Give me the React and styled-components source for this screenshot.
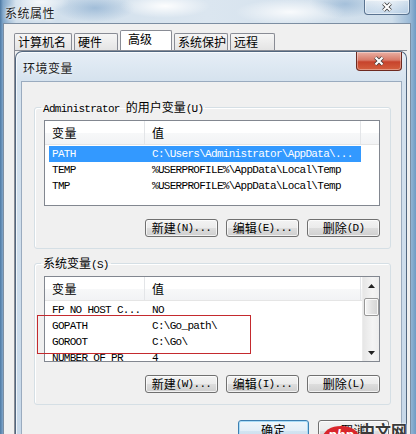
import React from "react";
import styled, {createGlobalStyle} from "styled-components";

const userVars = [
  {name: "PATH", value: "C:\\Users\\Administrator\\AppData\\...", selected: true},
  {name: "TEMP", value: "%USERPROFILE%\\AppData\\Local\\Temp"},
  {name: "TMP", value: "%USERPROFILE%\\AppData\\Local\\Temp"},
];

const sysVars = [
  {name: "FP NO HOST C...", value: "NO"},
  {name: "GOPATH", value: "C:\\Go_path\\"},
  {name: "GOROOT", value: "C:\\Go\\"},
  {name: "NUMBER OF PR", value: "4"},
];

const tabs = [
  {label: "计算机名", w: 58},
  {label: "硬件", w: 44},
  {label: "高级", w: 52, active: true},
  {label: "系统保护", w: 54},
  {label: "远程", w: 45},
];

const CJK_RE = /([\u3000-\u9fff\uff00-\uffef]+)/;

// SimSun style: wide CJK, narrow mono latin
const Txt = ({children}) =>
  String(children)
    .split(CJK_RE)
    .filter(Boolean)
    .map((part, i) =>
      CJK_RE.test(part) ? <Cjk key={i}>{part}</Cjk> : <span key={i}>{part}</span>
    );

const XIcon = () => (
  <svg width="12" height="10" viewBox="0 0 12 10">
    <path d="M2.5 1.5 L9.5 8.5 M9.5 1.5 L2.5 8.5" stroke="#3a3a3a" strokeWidth="3.8" />
    <path d="M2.5 1.5 L9.5 8.5 M9.5 1.5 L2.5 8.5" stroke="#fff" strokeWidth="2.2" />
  </svg>
);

const Arrow = ({down}) => (
  <svg width="7" height="4" viewBox="0 0 7 4">
    <path d={down ? "M0 0 L7 0 L3.5 4Z" : "M0 4 L3.5 0 L7 4Z"} fill="#222" />
  </svg>
);

const VarList = ({rows, scroll}) => (
  <ListBox>
    <ListMain>
      <Header>
        <HeaderCell>变量</HeaderCell>
        <HeaderCell>值</HeaderCell>
        <HeaderCell />
      </Header>
      <Rows>
        {rows.map((r) => (
          <Row key={r.name} $selected={r.selected}>
            <Cell $pl={3}>{r.name}</Cell>
            <Cell $pl={7}>{r.value}</Cell>
          </Row>
        ))}
      </Rows>
    </ListMain>
    {scroll && (
      <ScrollBar>
        <ArrowBtn>
          <Arrow />
        </ArrowBtn>
        <Thumb />
        <Track />
        <ArrowBtn>
          <Arrow down />
        </ArrowBtn>
      </ScrollBar>
    )}
  </ListBox>
);

const Buttons = ({labels}) => (
  <ButtonRow>
    {labels.map((l) => (
      <Button key={l}>
        <Txt>{l}</Txt>
      </Button>
    ))}
  </ButtonRow>
);

export default function App() {
  return (
    <Page>
      <GlobalStyle />
      <TitleBar>
        <TitleText>系统属性</TitleText>
        <GlassClose>
          <XIcon />
        </GlassClose>
      </TitleBar>
      <OuterBody>
        <TabRow>
          {tabs.map((t) => (
            <Tab key={t.label} $w={t.w} $active={t.active}>
              {t.label}
            </Tab>
          ))}
        </TabRow>
        <TabPanel>
          <Dialog>
            <DialogTitle>
              <DialogTitleText>环境变量</DialogTitleText>
              <RedClose>
                <XIcon />
              </RedClose>
            </DialogTitle>
            <Client>
              <Group>
                <Legend>
                  <Txt>Administrator 的用户变量(U)</Txt>
                </Legend>
                <VarList rows={userVars} />
                <Buttons labels={["新建(N)...", "编辑(E)...", "删除(D)"]} />
              </Group>
              <Group>
                <Legend>
                  <Txt>系统变量(S)</Txt>
                </Legend>
                <ListWrap>
                  <VarList rows={sysVars} scroll />
                  <Marker />
                </ListWrap>
                <Buttons labels={["新建(W)...", "编辑(I)...", "删除(L)"]} />
              </Group>
              <BottomRow>
                <DlgButton $focused>确定</DlgButton>
                <DlgButton>取消</DlgButton>
              </BottomRow>
            </Client>
          </Dialog>
        </TabPanel>
      </OuterBody>
      <Watermark>
        <PhpBadge>php</PhpBadge>
        <WatermarkText>中文网</WatermarkText>
      </Watermark>
    </Page>
  );
}

const GlobalStyle = createGlobalStyle`
  html, body {
    margin: 0;
    padding: 0;
  }
  body {
    background: #c6d9ea;
  }
  * {
    box-sizing: border-box;
  }
`;

const Cjk = styled.span`
  font-family: "Noto Sans CJK SC", sans-serif;
  font-size: 12px;
  letter-spacing: 0;
`;

const Page = styled.div`
  position: relative;
  width: 416px;
  height: 434px;
  overflow: hidden;
  display: flex;
  flex-direction: column;
  font-family: "Liberation Mono", "Noto Sans CJK SC", monospace;
  font-size: 11px;
  letter-spacing: -0.7px;
  color: #000;
  background:
    radial-gradient(ellipse 45px 12px at 165px 6px, rgba(255, 255, 255, 0.95), transparent),
    radial-gradient(ellipse 55px 13px at 290px 12px, rgba(255, 255, 255, 0.85), transparent),
    radial-gradient(ellipse 30px 10px at 40px 2px, rgba(255, 255, 255, 0.8), transparent),
    radial-gradient(ellipse 40px 14px at 95px 8px, rgba(120, 160, 200, 0.55), transparent),
    radial-gradient(ellipse 35px 14px at 345px 4px, rgba(120, 160, 200, 0.5), transparent),
    linear-gradient(90deg, #4c79a4 0, #7fa5c9 3px, #cfdeeb 16px, #dbe6f0 50%, #cfdeeb 392px, #9ab9d6 410px, #6f9bc4 416px);
`;

const TitleBar = styled.div`
  height: 23px;
  flex-shrink: 0;
  display: flex;
  align-items: flex-start;
  padding-left: 5px;
`;

const TitleText = styled.div`
  margin-top: 6px;
  font-family: "Noto Sans CJK SC", sans-serif;
  font-size: 12px;
  line-height: 13px;
  letter-spacing: 0.5px;
  color: #1b1b1b;
  text-shadow: 0 0 6px #fff, 0 0 3px #fff;
`;

const GlassClose = styled.div`
  margin-left: auto;
  margin-right: 6px;
  width: 46px;
  height: 15px;
  border: 1px solid #5a7390;
  border-top: none;
  border-radius: 0 0 4px 4px;
  background: linear-gradient(rgba(255, 255, 255, 0.55), rgba(190, 212, 234, 0.6));
  box-shadow: inset 0 0 0 1px rgba(255, 255, 255, 0.5);
  display: grid;
  place-items: center;
`;

const OuterBody = styled.div`
  flex: 1;
  min-height: 0;
  margin: 0 5px 0 3px;
  border: 1px solid #7c8ea2;
  border-bottom: none;
  background: #f0f0f0;
  padding: 6px 3px 0 10px;
  display: flex;
  flex-direction: column;
`;

const TabRow = styled.div`
  display: flex;
  align-items: flex-end;
  gap: 2px;
  height: 20px;
  flex-shrink: 0;
`;

const Tab = styled.div`
  width: ${(p) => p.$w}px;
  height: ${(p) => (p.$active ? 20 : 17)}px;
  border: 1px solid #898c95;
  border-bottom: none;
  border-radius: 2px 2px 0 0;
  background: ${(p) => (p.$active ? "#fff" : "linear-gradient(#f6f6f6, #e4e4e4)")};
  padding: 1px 0 0 ${(p) => (p.$active ? 7 : 3)}px;
  font-family: "Noto Sans CJK SC", sans-serif;
  font-size: 12px;
  line-height: 14px;
  letter-spacing: 0;
  white-space: nowrap;
  overflow: hidden;
`;

const TabPanel = styled.div`
  flex: 1;
  min-height: 0;
  border-top: 1px solid #898c95;
  border-left: 1px solid #898c95;
  display: flex;
  flex-direction: column;
`;

const Dialog = styled.div`
  flex: 1;
  min-height: 0;
  border: 1px solid #52677f;
  border-bottom: none;
  border-radius: 7px 7px 0 0;
  background: linear-gradient(#e6eef6, #d5e2ee 30px, #c7d8e9);
  box-shadow: inset 1px 1px 0 rgba(255, 255, 255, 0.7);
  padding: 0 4px 0 5px;
  display: flex;
  flex-direction: column;
`;

const DialogTitle = styled.div`
  height: 29px;
  flex-shrink: 0;
  display: flex;
  align-items: flex-start;
`;

const DialogTitleText = styled.div`
  margin: 9px 0 0 2px;
  font-family: "Noto Sans CJK SC", sans-serif;
  font-size: 12px;
  line-height: 14px;
  letter-spacing: 0.5px;
  color: #1a1a1a;
  text-shadow: 0 0 5px #fff;
`;

const RedClose = styled.div`
  margin-left: auto;
  width: 46px;
  height: 19px;
  border: 1px solid #6e2a20;
  border-top: none;
  border-radius: 0 0 4px 4px;
  background: linear-gradient(#eab0a4 0%, #d87a68 45%, #c7432c 55%, #d4603f 100%);
  box-shadow: inset 0 0 0 1px rgba(255, 255, 255, 0.35);
  display: grid;
  place-items: center;
`;

const Client = styled.div`
  flex: 1;
  min-height: 0;
  background: #f0f0f0;
  border: 1px solid #9aabbf;
  border-bottom: none;
  padding: 18px 10px 0 12px;
  display: flex;
  flex-direction: column;
`;

const Group = styled.fieldset`
  margin: 0;
  min-width: 0;
  border: 1px solid #d5dfe5;
  border-radius: 3px;
  padding: 6px 10px 11px 9px;
  box-shadow: inset 1px 1px 0 #fff;

  & + & {
    margin-top: 7px;
  }
`;

const Legend = styled.legend`
  margin-left: -3px;
  padding: 0 2px;
  height: 14px;
  line-height: 14px;
  white-space: nowrap;
`;

const ListWrap = styled.div`
  position: relative;
`;

const ListBox = styled.div`
  height: 86px;
  border: 1px solid #828790;
  background: #fff;
  display: flex;
  overflow: hidden;
`;

const ListMain = styled.div`
  flex: 1;
  min-width: 0;
  display: flex;
  flex-direction: column;
`;

const Header = styled.div`
  height: 24px;
  flex-shrink: 0;
  display: grid;
  grid-template-columns: 100px 216px 1fr;
  border-bottom: 1px solid #e5e5e5;
  background: linear-gradient(#fff 0%, #fff 50%, #f7f8f9 51%, #f2f3f5 100%);
`;

const HeaderCell = styled.div`
  display: flex;
  align-items: center;
  padding-left: 7px;
  border-right: 1px solid #e3e5e8;
  font-family: "Noto Sans CJK SC", sans-serif;
  font-size: 12px;
  letter-spacing: 0.5px;

  &:last-child {
    border-right: none;
  }
`;

const Rows = styled.div`
  padding: 1px 0 0 4px;
`;

const Row = styled.div`
  display: grid;
  grid-template-columns: 96px 216px;
  width: 312px;
  height: 16px;
  line-height: 16px;
  white-space: nowrap;
  background: ${(p) => (p.$selected ? "#3399ff" : "transparent")};
  color: ${(p) => (p.$selected ? "#fff" : "#000")};
`;

const Cell = styled.div`
  padding-left: ${(p) => p.$pl}px;
  overflow: hidden;
`;

const ScrollBar = styled.div`
  width: 17px;
  flex-shrink: 0;
  display: flex;
  flex-direction: column;
  align-items: center;
  border-left: 1px solid #ececec;
  background: linear-gradient(90deg, #e6e6e6, #f4f4f4 60%, #ededed);
`;

const ArrowBtn = styled.div`
  width: 16px;
  height: 17px;
  display: grid;
  place-items: center;
`;

const Thumb = styled.div`
  margin-top: 4px;
  width: 15px;
  height: 18px;
  border: 1px solid #979797;
  border-radius: 2px;
  background: linear-gradient(90deg, #f5f5f5, #e2e2e2 50%, #d4d4d4);
  box-shadow: inset 0 0 0 1px rgba(255, 255, 255, 0.8);
`;

const Track = styled.div`
  flex: 1;
`;

const Marker = styled.div`
  position: absolute;
  left: -7px;
  top: 39px;
  width: 214px;
  height: 39px;
  border: 1px solid #c42a2e;
  pointer-events: none;
`;

const ButtonRow = styled.div`
  display: flex;
  justify-content: flex-end;
  gap: 8px;
  margin-top: 13px;
`;

const Button = styled.div`
  width: 73px;
  height: 18px;
  border: 1px solid #707070;
  border-radius: 3px;
  background: linear-gradient(#f3f3f3 0%, #ebebeb 50%, #dddddd 51%, #cfcfcf 100%);
  box-shadow: inset 0 0 0 1px rgba(255, 255, 255, 0.7);
  display: flex;
  align-items: center;
  justify-content: center;
  line-height: 16px;
  white-space: nowrap;
`;

const BottomRow = styled.div`
  display: flex;
  justify-content: flex-end;
  gap: 9px;
  margin-top: 15px;
  padding-right: 2px;
`;

const DlgButton = styled.div`
  width: 71px;
  height: 22px;
  border: 1px solid ${(p) => (p.$focused ? "#3c7fb1" : "#707070")};
  border-radius: 3px;
  background: ${(p) =>
    p.$focused
      ? "linear-gradient(#eef6fb 0%, #e2eef7 50%, #d2e4f1 51%, #c6dcee 100%)"
      : "linear-gradient(#f3f3f3 0%, #ebebeb 50%, #dddddd 51%, #cfcfcf 100%)"};
  box-shadow: inset 0 0 0 1px ${(p) => (p.$focused ? "#a9dcf7" : "rgba(255,255,255,0.7)")};
  display: flex;
  justify-content: center;
  padding-top: 1px;
  font-family: "Noto Sans CJK SC", sans-serif;
  font-size: 12px;
  line-height: 16px;
  letter-spacing: 0.5px;
`;

const Watermark = styled.div`
  position: absolute;
  left: 323px;
  top: 420px;
  display: flex;
  align-items: flex-start;
  pointer-events: none;
`;

const PhpBadge = styled.div`
  margin-top: 6px;
  width: 36px;
  height: 22px;
  border-radius: 50%;
  background: #d9262b;
  color: #fff;
  font-family: "Liberation Sans", sans-serif;
  font-style: italic;
  font-weight: bold;
  font-size: 14px;
  letter-spacing: 0;
  line-height: 18px;
  text-align: center;
`;

const WatermarkText = styled.div`
  font-family: "Noto Sans CJK SC", sans-serif;
  font-weight: bold;
  font-size: 16px;
  line-height: 20px;
  letter-spacing: 0;
  color: #3a3a3a;
  text-shadow: 0 0 2px #fff, 0 0 2px #fff;
`;
